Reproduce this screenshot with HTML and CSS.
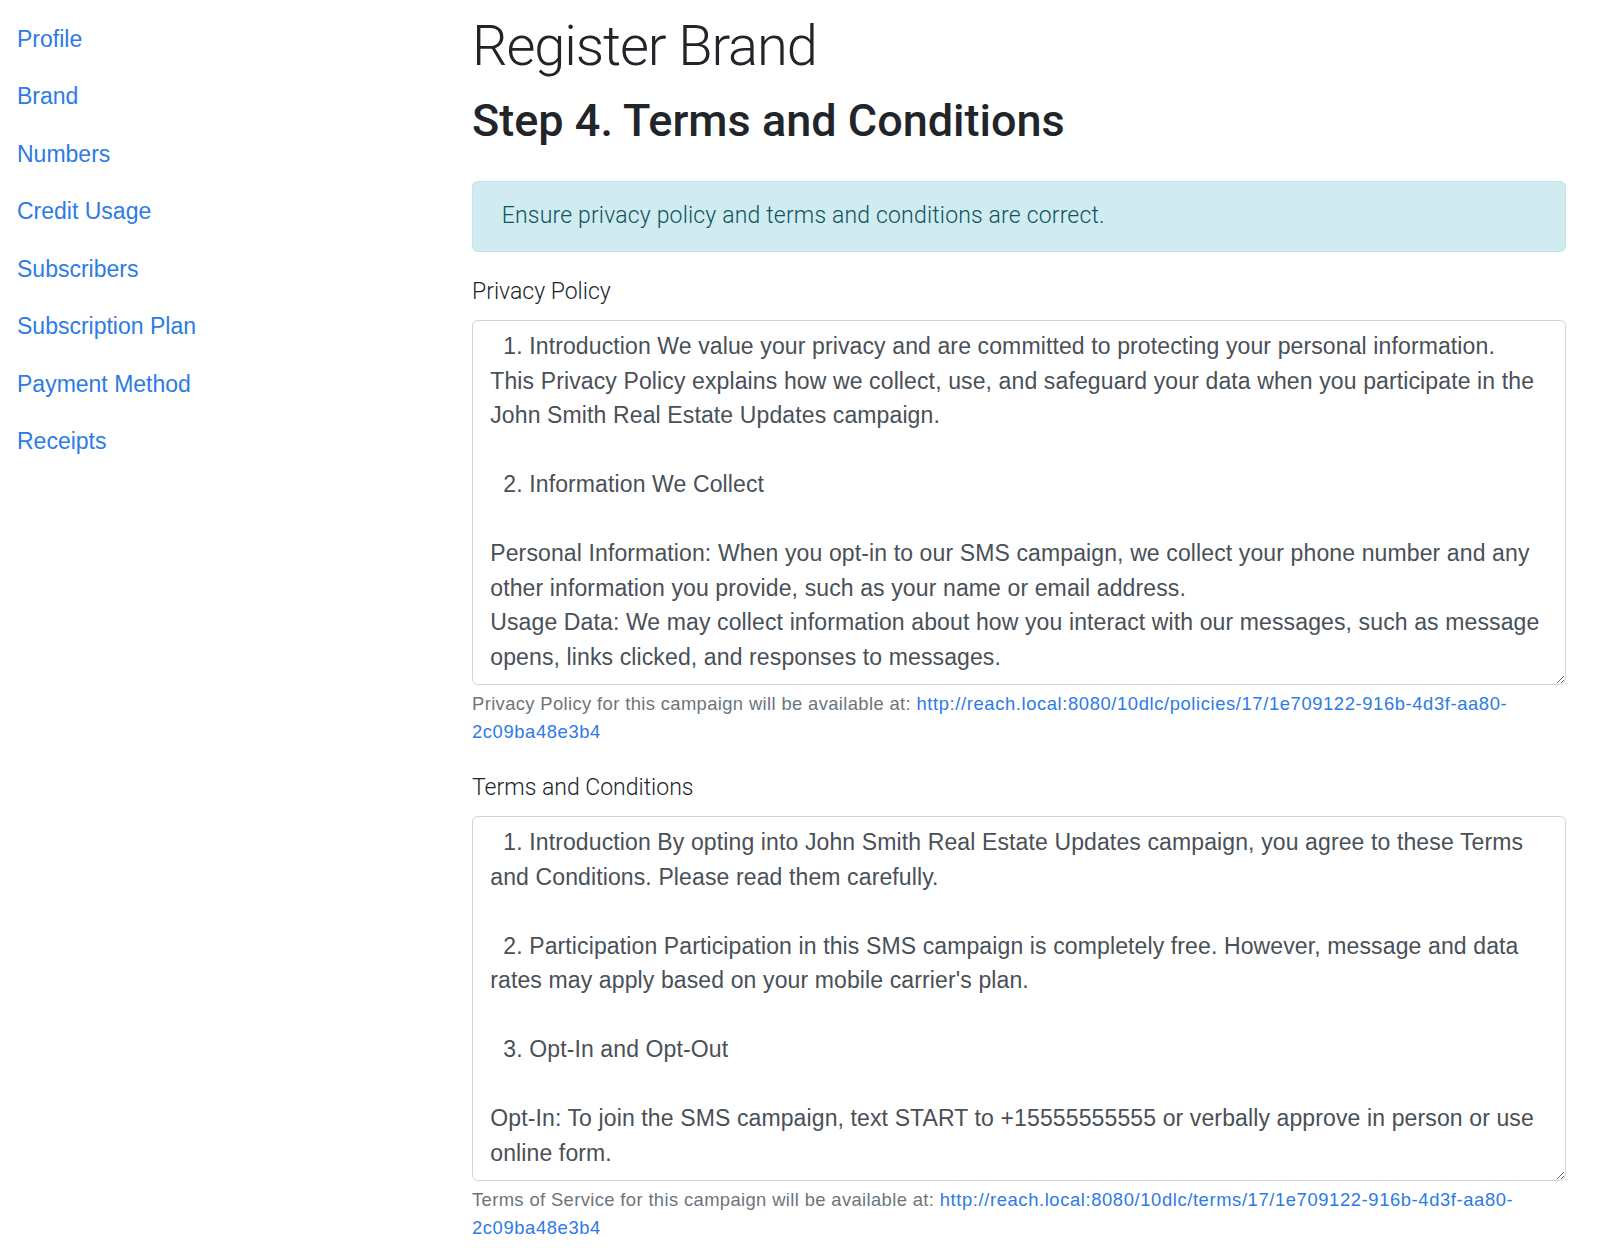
FILE: index.html
```html
<!DOCTYPE html>
<html lang="en">
<head>
    <meta charset="UTF-8">
    <meta name="viewport" content="width=device-width, initial-scale=1.0">
    <title>Register Brand</title>
    <link rel="stylesheet" href="styles.css">
</head>
<body>
    <div class="page">
        <nav class="sidebar">
            <a class="nav-link" href="#">Profile</a>
            <a class="nav-link" href="#">Brand</a>
            <a class="nav-link" href="#">Numbers</a>
            <a class="nav-link" href="#">Credit Usage</a>
            <a class="nav-link" href="#">Subscribers</a>
            <a class="nav-link" href="#">Subscription Plan</a>
            <a class="nav-link" href="#">Payment Method</a>
            <a class="nav-link" href="#">Receipts</a>
        </nav>

        <main class="content">
            <h1 class="title">Register Brand</h1>
            <h2 class="step">Step 4. Terms and Conditions</h2>

            <div class="alert">Ensure privacy policy and terms and conditions are correct.</div>

            <div class="form-group">
                <label for="privacy">Privacy Policy</label>
                <textarea id="privacy" class="form-control" rows="10">  1. Introduction We value your privacy and are committed to protecting your personal information.
This Privacy Policy explains how we collect, use, and safeguard your data when you participate in the
John Smith Real Estate Updates campaign.

  2. Information We Collect

Personal Information: When you opt-in to our SMS campaign, we collect your phone number and any
other information you provide, such as your name or email address.
Usage Data: We may collect information about how you interact with our messages, such as message
opens, links clicked, and responses to messages.</textarea>
                <small class="form-text">Privacy Policy for this campaign will be available at: <a href="#">http://reach.local:8080/10dlc/policies/17/1e709122-916b-4d3f-aa80-2c09ba48e3b4</a></small>
            </div>

            <div class="form-group">
                <label for="terms">Terms and Conditions</label>
                <textarea id="terms" class="form-control" rows="10">  1. Introduction By opting into John Smith Real Estate Updates campaign, you agree to these Terms
and Conditions. Please read them carefully.

  2. Participation Participation in this SMS campaign is completely free. However, message and data
rates may apply based on your mobile carrier's plan.

  3. Opt-In and Opt-Out

Opt-In: To join the SMS campaign, text START to +15555555555 or verbally approve in person or use
online form.</textarea>
                <small class="form-text">Terms of Service for this campaign will be available at: <a href="#">http://reach.local:8080/10dlc/terms/17/1e709122-916b-4d3f-aa80-2c09ba48e3b4</a></small>
            </div>
        </main>
    </div>
</body>
</html>
```

FILE: styles.css
```css
body {
    margin: 0;
    background: #fff;
    color: #212529;
    font-family: "Liberation Sans", Arial, sans-serif;
    font-size: 23px;
    line-height: 1.5;
}

a {
    color: #2d7be5;
    text-decoration: none;
}

.page {
    display: grid;
    grid-template-columns: 472px 1094px;
}

/* Left navigation */
.sidebar {
    display: flex;
    flex-direction: column;
    padding-top: 10px;
}

.nav-link {
    padding: 11.5px 17px;
}

/* Main column */
.content {
    padding-top: 13px;
}

.title {
    margin: 0 0 14px;
    font-family: Roboto, sans-serif;
    font-weight: 300;
    font-size: 56px;
    line-height: 1.2;
    letter-spacing: -1.1px;
}

.step {
    margin: 0 0 33px;
    font-family: Roboto, sans-serif;
    font-weight: 500;
    font-size: 45px;
    line-height: 1.2;
}

.alert {
    padding: 17.25px 28.75px;
    margin-bottom: 23px;
    border: 1.4px solid #bee5eb;
    border-radius: 5.75px;
    background: #d1ecf1;
    color: #0c5460;
    font-family: Roboto, sans-serif;
    font-weight: 300;
    letter-spacing: 0.17px;
}

.form-group {
    margin-bottom: 25.5px;
}

.form-group label {
    display: block;
    margin-bottom: 10px;
    font-family: Roboto, sans-serif;
    font-weight: 300;
}

.form-control {
    display: block;
    box-sizing: border-box;
    width: 100%;
    height: 365px;
    padding: 8.6px 17.25px;
    border: 1.4px solid #ced4da;
    border-radius: 5.75px;
    color: #495057;
    font-family: "Liberation Sans", Arial, sans-serif;
    font-size: 23px;
    line-height: 1.5;
    letter-spacing: 0.12px;
    resize: vertical;
    scrollbar-width: none;
}

.form-text {
    display: block;
    margin-top: 5.75px;
    color: #6c757d;
    font-size: 18.4px;
    letter-spacing: 0.37px;
}

.form-text a {
    letter-spacing: 0.6px;
}
```
